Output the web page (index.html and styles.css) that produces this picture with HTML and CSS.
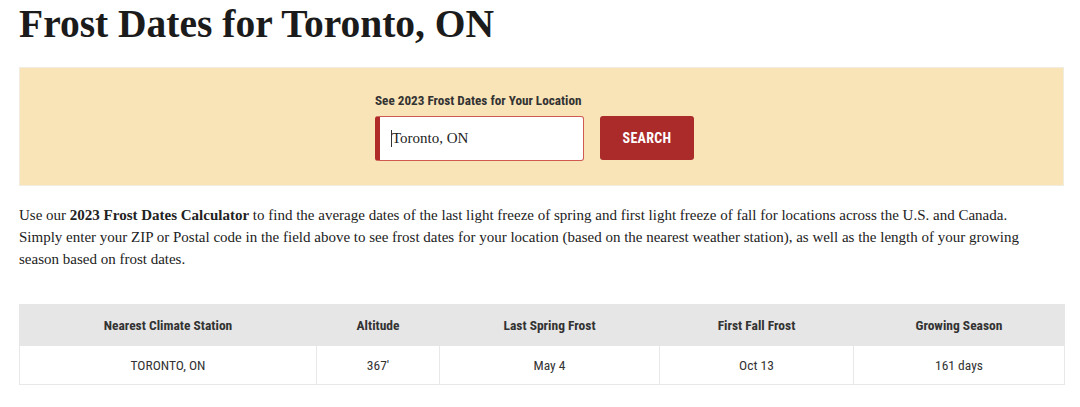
FILE: index.html
```html
<!DOCTYPE html>
<html>
<head>
<meta charset="utf-8">
<link rel="stylesheet" href="styles.css">
</head>
<body>
<div class="page">
  <h1 class="title">Frost Dates for Toronto, ON</h1>
  <div class="search-box">
    <form class="search-form">
      <label class="search-label">See 2023 Frost Dates for Your Location</label>
      <div class="search-row">
        <div class="search-input"><span class="caret"></span>Toronto, ON</div>
        <button class="search-btn" type="button">SEARCH</button>
      </div>
    </form>
  </div>
  <p class="intro">Use our <b>2023 Frost Dates Calculator</b> to find the average dates of the last light freeze of spring and first light freeze of fall for locations across the U.S. and Canada.<br>Simply enter your ZIP or Postal code in the field above to see frost dates for your location (based on the nearest weather station), as well as the length of your growing<br>season based on frost dates.</p>
  <table class="frost-table">
    <colgroup>
      <col class="c1"><col class="c2"><col class="c3"><col class="c4"><col class="c5">
    </colgroup>
    <thead>
      <tr><th>Nearest Climate Station</th><th>Altitude</th><th>Last Spring Frost</th><th>First Fall Frost</th><th>Growing Season</th></tr>
    </thead>
    <tbody>
      <tr><td>TORONTO, ON</td><td>367'</td><td>May 4</td><td>Oct 13</td><td>161 days</td></tr>
    </tbody>
  </table>
</div>
</body>
</html>
```
FILE: styles.css
```css
html, body {
  margin: 0;
  padding: 0;
  background: #ffffff;
}
.page {
  width: 1045px;
  padding: 0 0 0 19px;
  font-family: "Liberation Serif", serif;
  color: #222;
}
.title {
  margin: 0;
  padding-top: 2px;
  font-family: "Liberation Serif", serif;
  font-weight: bold;
  font-size: 39.5px;
  line-height: 44px;
  color: #1b1b1b;
  height: 65px;
}
.search-box {
  background: #f9e4b7;
  border: 1px solid #f1ece0;
  padding-left: 355px;
  box-sizing: border-box;
  height: 119px;
}
.search-form {
  display: flex;
  flex-direction: column;
  padding-top: 24px;
}
.search-label {
  font-family: "Roboto Condensed", "Liberation Sans Narrow", "DejaVu Sans Condensed", Roboto, sans-serif;
  font-stretch: condensed;
  font-weight: bold;
  font-size: 13.2px;
  line-height: 18px;
  color: #333;
  height: 24px;
}
.search-row {
  display: flex;
  gap: 16px;
}
.search-input {
  width: 209px;
  height: 45px;
  box-sizing: border-box;
  background: #fff;
  border: 1.5px solid #cf5a50;
  border-left: 5px solid #b02a2a;
  border-radius: 3px;
  font-family: "Liberation Serif", serif;
  font-size: 15px;
  color: #222;
  display: flex;
  align-items: center;
  padding-left: 11px;
}
.caret {
  display: inline-block;
  width: 1px;
  height: 17px;
  background: #333;
}
.search-btn {
  width: 94px;
  height: 44px;
  background: #ab2a2a;
  border: none;
  border-radius: 3px;
  color: #fff;
  font-family: "Roboto Condensed", "Liberation Sans Narrow", "DejaVu Sans Condensed", Roboto, sans-serif;
  font-stretch: condensed;
  font-weight: bold;
  font-size: 14px;
  letter-spacing: 0.3px;
}
.intro {
  margin: 18px 0 0 0;
  font-size: 15px;
  line-height: 22px;
  color: #222;
  height: 100px;
  white-space: nowrap;
}
.intro b {
  font-weight: bold;
}
.frost-table {
  width: 1045px;
  border-collapse: collapse;
  table-layout: fixed;
  font-family: "Roboto Condensed", "Liberation Sans Narrow", "DejaVu Sans Condensed", Roboto, sans-serif;
  font-stretch: condensed;
  font-size: 13.5px;
  color: #333;
}
.c1 { width: 297px; }
.c2 { width: 123px; }
.c3 { width: 220px; }
.c4 { width: 194px; }
.c5 { width: 211px; }
.frost-table th {
  background: #e6e6e6;
  font-weight: bold;
  height: 40px;
  padding: 0;
  border: 1px solid #e6e6e6;
  text-align: center;
}
.frost-table td {
  height: 38px;
  padding: 0;
  border: 1px solid #e8e8e8;
  text-align: center;
  background: #fff;
}
```
